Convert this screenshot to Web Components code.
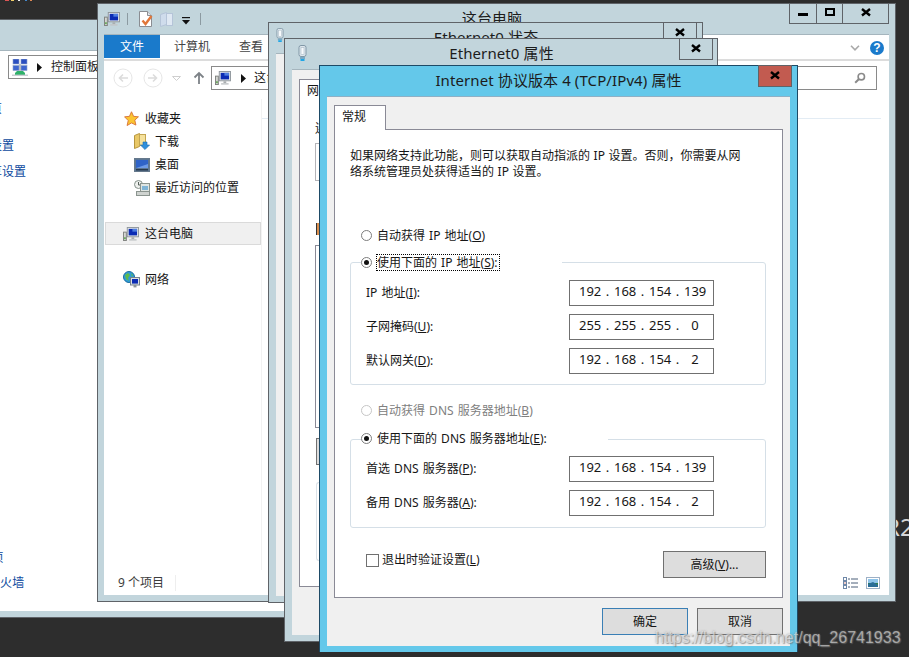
<!DOCTYPE html>
<html>
<head>
<meta charset="utf-8">
<style>
  html, body { margin: 0; height: 657px; overflow: hidden; background: #2d2d2d; }
  body { position: relative; font: 12px/16px "Noto Sans", "Noto Sans CJK SC", sans-serif; color: #111; }
  .crumbs { position: absolute; left: 5px; top: 0; width: 28px; height: 1px; background: linear-gradient(90deg, #d55 0 4px, transparent 4px 6px, #ec6 6px 9px, transparent 9px 13px, #eee 13px 15px, transparent 15px 20px, #48c 20px 22px, transparent 22px 25px, #d85 25px 27px, transparent 27px); }
  .r2 { position: absolute; left: 885px; top: 511px; font-size: 24px; line-height: 32px; color: #d6d6d6; }
  .mark { position: absolute; left: 655px; top: 629px; z-index: 9; font: 16px/18px "Liberation Sans", sans-serif; color: rgba(255,255,255,.5); text-shadow: 0 0 2px rgba(120,120,120,.7), 1px 1px 1px rgba(110,110,110,.6); white-space: nowrap; }
</style>
</head>
<body>
<template id="icons">
  <svg data-name="pc" viewBox="0 0 17 15"><rect x=".5" y="5.5" width="3" height="9" fill="#d4d6d2" stroke="#7d7f7c"/><rect x="1" y="11" width="2" height="2" fill="#6caa5f"/><rect x="4.5" y=".5" width="12" height="10" fill="#e3e6e8" stroke="#8e959b"/><rect x="6" y="2" width="9" height="7" fill="#0b2bb4"/><rect x="10" y="2" width="5" height="3" fill="#4d7de0"/><rect x="9" y="11" width="3" height="2" fill="#a9adb0"/><rect x="6.5" y="13" width="8" height="1.6" fill="#c3c6c8"/></svg>
  <svg data-name="doc" viewBox="0 0 15 16"><path d="M1.5.5h8l4 4v11h-12z" fill="#fff" stroke="#8a8d92"/><path d="M9.5.5v4h4" fill="#dfe3e8" stroke="#8a8d92"/><path d="M4.5 9.5l3 3.5 6-8" fill="none" stroke="#e0773a" stroke-width="2.4"/></svg>
  <svg data-name="pages" viewBox="0 0 14 15"><path d="M.5 2.5l6-2v12l-6 2z" fill="#cfdcec" stroke="#b5c4d8"/><rect x="6.5" y="1.5" width="6" height="12" fill="#dfe8f3" stroke="#b5c4d8"/></svg>
  <svg data-name="star" viewBox="0 0 16 16"><path d="M8 .8l2.2 4.9 5.2.5-3.9 3.5 1.2 5.3L8 12.7l-4.7 2.8 1.2-5.3L.6 6.2l5.2-.5z" fill="#fbc531" stroke="#d9743a"/></svg>
  <svg data-name="folder" viewBox="0 0 16 17"><path d="M.5 2.5l5-2v13l-5 2z" fill="#e9c867" stroke="#b7963f"/><rect x="5.5" y="1.5" width="6" height="11" fill="#f5e19c" stroke="#c3a551"/><path d="M9 9h4v3h2.6L11 16.6 6.4 12H9z" fill="#2f8fdc" stroke="#1d6cae" stroke-width=".6"/></svg>
  <svg data-name="desk" viewBox="0 0 16 14"><rect x=".5" y=".5" width="15" height="13" fill="#5c7692" stroke="#66798c"/><rect x="2" y="2" width="12" height="8" fill="#2f63c8"/><path d="M2 10l12-4v4z" fill="#6d9ae6"/><rect x="2" y="11" width="12" height="1.5" fill="#26384c"/></svg>
  <svg data-name="recent" viewBox="0 0 16 16"><circle cx="4.5" cy="4.5" r="4" fill="#eef0ee" stroke="#85908a"/><path d="M4.5 2v3h2.4" fill="none" stroke="#56605a"/><rect x="6.5" y="3.5" width="9" height="8" fill="#dfe5e2" stroke="#8b948f"/><rect x="8" y="6" width="6" height="4" fill="#7fb4d6"/><rect x="2.5" y="11.5" width="13" height="4" fill="#cfd3d0" stroke="#8b948f"/></svg>
  <svg data-name="net" viewBox="0 0 17 17"><circle cx="6" cy="6" r="5.5" fill="#2f9bd9" stroke="#1b6d9e"/><path d="M2 4l3-2 2 2-2 3 1 3-3-2zM8 2l2 2-1 2z" fill="#5fbb4b"/><rect x="7.5" y="6.5" width="9" height="7.5" fill="#d9dfe3" stroke="#74808a"/><rect x="9" y="8" width="6" height="4.6" fill="#0b2bb4"/><rect x="10.5" y="14" width="3" height="2.4" fill="#8d959b"/></svg>
  <svg data-name="panel" viewBox="0 0 16 17"><rect x="1" y="0" width="6" height="5" fill="#2b4fc0" stroke="#8ea2c9" stroke-width=".6"/><rect x="9" y="0" width="6" height="5" fill="#2b4fc0" stroke="#8ea2c9" stroke-width=".6"/><rect x="1" y="6.5" width="6" height="5" fill="#3f66cf" stroke="#8ea2c9" stroke-width=".6"/><rect x="9" y="6.5" width="6" height="5" fill="#3f66cf" stroke="#8ea2c9" stroke-width=".6"/><path d="M8 5v7" stroke="#8c9299"/><path d="M5 12h6l2 2v2H3v-2z" fill="#2fb26a"/><rect x="0" y="15.6" width="16" height="1.2" fill="#bcc2c7"/></svg>
  <svg data-name="usb" viewBox="0 0 9 16"><rect x="1" y=".5" width="7" height="11" rx="2" fill="#dfe8ee" stroke="#8097a6"/><rect x="3" y="2.5" width="3" height="7" fill="#f7fafc" stroke="#a9bac5" stroke-width=".6"/><rect x="2" y="12" width="5" height="2" fill="#7aa9c4"/><rect x="2.5" y="14" width="4" height="2" fill="#1fa6e6"/></svg>
  <svg data-name="details" viewBox="0 0 15 12"><rect x=".5" y=".5" width="3" height="3" fill="#fff" stroke="#6f88a8"/><rect x=".5" y="4.5" width="3" height="3" fill="#fff" stroke="#6f88a8"/><rect x="1.5" y="5.5" width="1" height="1" fill="#c0392b"/><rect x=".5" y="8.5" width="3" height="3" fill="#fff" stroke="#6f88a8"/><path d="M5 2h2M8 2h7M5 6h2M8 6h7M5 10h2M8 10h7" stroke="#4a5f78"/></svg>
  <svg data-name="thumb" viewBox="0 0 14 12"><rect x=".5" y=".5" width="13" height="11" fill="#fff" stroke="#9db0c6"/><rect x="2" y="2" width="10" height="4" fill="#8ec4ea"/><path d="M2 6h10v4H2z" fill="#2f7d4f"/><path d="M2 7l5-2 5 3v2H2z" fill="#2a6d97"/></svg>
  <svg data-name="back" viewBox="0 0 20 20"><circle cx="10" cy="10" r="9" fill="#fff" stroke="#e6e6e6"/><path d="M15 10H7M10 6.5L6.5 10l3.5 3.5" fill="none" stroke="#dcdcdc" stroke-width="1.6"/></svg>
  <svg data-name="fwd" viewBox="0 0 20 20"><circle cx="10" cy="10" r="9" fill="#fff" stroke="#e6e6e6"/><path d="M5 10h8M10 6.5l3.5 3.5-3.5 3.5" fill="none" stroke="#dcdcdc" stroke-width="1.6"/></svg>
  <svg data-name="up" viewBox="0 0 12 14"><path d="M6 13V2M1.5 6.5L6 2l4.5 4.5" fill="none" stroke="#7d8287" stroke-width="1.8"/></svg>
  <svg data-name="drop" viewBox="0 0 9 5"><path d="M.5.5h8L4.5 4.5z" fill="#fff" stroke="#cfcfcf"/></svg>
  <svg data-name="qdrop" viewBox="0 0 8 8"><rect x="0" y="0" width="8" height="1.2" fill="#111"/><path d="M0 3h8L4 7.5z" fill="#111"/></svg>
  <svg data-name="tri" viewBox="0 0 5 9"><path d="M0 0l5 4.5L0 9z" fill="#111"/></svg>
  <svg data-name="chev" viewBox="0 0 10 6"><path d="M1 .8l4 4 4-4" fill="none" stroke="#a9a9a9" stroke-width="1.6"/></svg>
  <svg data-name="lens" viewBox="0 0 12 12"><circle cx="7.3" cy="4.7" r="3.2" fill="none" stroke="#8a8a8a" stroke-width="1.6"/><path d="M5 7L1.2 10.8" stroke="#8a8a8a" stroke-width="2"/></svg>
</template>

<script>
class AppIcon extends HTMLElement {
  constructor() {
    super();
    this.attachShadow({ mode: 'open' });
  }
  connectedCallback() {
    const src = document.getElementById('icons').content.querySelector(`[data-name="${this.getAttribute('name')}"]`);
    this.shadowRoot.innerHTML = `<style>
      :host { display: inline-flex; flex: none; width: ${this.getAttribute('w')}px; height: ${this.getAttribute('h')}px; }
      svg { width: 100%; height: 100%; display: block; }
    </style>`;
    this.shadowRoot.appendChild(src.cloneNode(true));
  }
}

class AppWindow extends HTMLElement {
  constructor() {
    super();
    this.attachShadow({ mode: 'open' });
    this.shadowRoot.innerHTML = `<style>
      :host { position: absolute; display: flex; flex-direction: column; box-sizing: border-box; border: 1px solid #5f6368; background: var(--frame, #c2d5dc); padding: 0 6px 6px; }
      .bar { flex: none; height: 30px; display: grid; grid-template-columns: 1fr auto 1fr; }
      .left { display: flex; align-items: center; min-width: 0; }
      .title { font-size: 15px; line-height: 28px; letter-spacing: .1px; color: #1c1c1c; white-space: nowrap; margin-right: var(--title-nudge, 0px); }
      .right { display: flex; justify-content: flex-end; align-items: flex-start; margin-top: -1px; }
      .body { flex: 1; min-height: 0; display: flex; flex-direction: column; background: var(--inner, #fff); border-top: 1px solid var(--edge, #a5b5bd); box-sizing: border-box; overflow: hidden; }
    </style>
    <div class="bar">
      <div class="left"><slot name="left"></slot></div>
      <div class="title"><slot name="title"></slot></div>
      <div class="right"><slot name="buttons"></slot></div>
    </div>
    <div class="body"><slot></slot></div>`;
  }
}

class CaptionButton extends HTMLElement {
  constructor() {
    super();
    this.attachShadow({ mode: 'open' });
  }
  connectedCallback() {
    const glyphs = {
      x: '<path d="M1 1l8 6.5M9 1L1 7.5" stroke="#000" stroke-width="2.4" fill="none"/>',
      min: '<rect x="0" y="5" width="10" height="3" fill="#000"/>',
      max: '<rect x="1" y="1" width="8" height="6" stroke="#000" stroke-width="2" fill="none"/>'
    };
    this.shadowRoot.innerHTML = `<style>
      :host { display: flex; align-items: center; justify-content: center; box-sizing: border-box; height: var(--h, 22px); width: ${this.getAttribute('w')}px; border: 1px solid #5f6368; margin-left: -1px; background: var(--btn, transparent); }
      svg { width: 10px; height: 9px; display: block; margin-top: -2px; }
    </style><svg viewBox="0 0 10 9">${glyphs[this.getAttribute('kind')]}</svg>`;
  }
}

class ExplorerPane extends HTMLElement {
  constructor() {
    super();
    this.attachShadow({ mode: 'open' });
    this.shadowRoot.innerHTML = `<style>
      :host { display: flex; flex-direction: column; flex: 1; min-height: 0; font-size: 12px; line-height: 16px; color: #161616; }
      .ribbon { flex: none; height: 26px; box-sizing: border-box; border-bottom: 2px solid #dcdcdc; display: flex; }
      .file { width: 56px; height: 23px; background: #1a7acb; color: #fff; text-align: center; line-height: 23px; }
      .tab { color: #444; line-height: 23px; }
      .ribbon-end { margin-left: auto; display: flex; align-items: center; gap: 10px; padding: 0 5px 0 0; height: 26px; }
      .help { width: 14px; height: 14px; border-radius: 50%; background: #1a7acb; color: #fff; font: bold 12px/14px "Liberation Sans", sans-serif; text-align: center; }
      .nav { flex: none; height: 38px; box-sizing: border-box; padding: 5px 12px 0 9px; display: flex; align-items: flex-start; }
      .box { box-sizing: border-box; height: 24px; border: 1px solid #8a8a8a; display: flex; align-items: center; background: #fff; white-space: nowrap; overflow: hidden; }
      .addr { flex: 1; padding-left: 3px; gap: 5px; }
      .search { width: 200px; margin-left: 6px; justify-content: flex-end; padding-right: 10px; }
      .navbtn { margin-top: 2px; }
      .main { flex: 1; min-height: 0; display: flex; }
      .tree { width: 158px; box-sizing: border-box; border-right: 1px solid #f2f2f2; display: grid; grid-auto-rows: 23px; padding-top: 8px; align-content: start; }
      .rest { flex: 1; padding-right: 8px; }
      .cols { height: 19px; border-bottom: 1px solid #e3ecf4; }
      .status { flex: none; height: 25px; display: flex; align-items: center; padding: 0 9px 0 14px; color: #3c3c3c; }
      .count { padding-right: 11px; border-right: 1px solid #eeeeee; }
      .views { margin-left: auto; display: flex; gap: 8px; }
    </style>
    <div class="ribbon">
      <div class="file">文件</div>
      <div class="tab" style="margin-left:14px">计算机</div>
      <div class="tab" style="margin-left:29px">查看</div>
      <div class="ribbon-end">
        <app-icon name="chev" w="10" h="6"></app-icon>
        <div class="help">?</div>
      </div>
    </div>
    <div class="nav">
      <app-icon class="navbtn" name="back" w="20" h="20"></app-icon>
      <app-icon class="navbtn" name="fwd" w="20" h="20" style="margin-left:10px"></app-icon>
      <app-icon class="navbtn" name="drop" w="9" h="5" style="margin:10px 0 0 9px"></app-icon>
      <app-icon class="navbtn" name="up" w="12" h="14" style="margin:5px 0 0 12px"></app-icon>
      <div class="box addr" style="margin-left:6px">
        <app-icon name="pc" w="16" h="14"></app-icon>
        <app-icon name="tri" w="5" h="9" style="margin:0 3px 0 5px"></app-icon>
        <span>这台电脑</span>
      </div>
      <div class="box search"><app-icon name="lens" w="12" h="12"></app-icon></div>
    </div>
    <div class="main">
      <div class="tree">
        <tree-row><app-icon slot="icon" name="star" w="15" h="15"></app-icon>收藏夹</tree-row>
        <tree-row child><app-icon slot="icon" name="folder" w="16" h="17"></app-icon>下载</tree-row>
        <tree-row child><app-icon slot="icon" name="desk" w="16" h="14"></app-icon>桌面</tree-row>
        <tree-row child><app-icon slot="icon" name="recent" w="16" h="16"></app-icon>最近访问的位置</tree-row>
        <div></div>
        <tree-row selected><app-icon slot="icon" name="pc" w="16" h="14"></app-icon>这台电脑</tree-row>
        <div></div>
        <tree-row><app-icon slot="icon" name="net" w="17" h="17"></app-icon>网络</tree-row>
      </div>
      <div class="rest"><div class="cols"></div></div>
    </div>
    <div class="status">
      <div class="count">9 个项目</div>
      <div class="views">
        <app-icon name="details" w="15" h="12"></app-icon>
        <app-icon name="thumb" w="14" h="12"></app-icon>
      </div>
    </div>`;
  }
}

class TreeRow extends HTMLElement {
  constructor() {
    super();
    this.attachShadow({ mode: 'open' });
    this.shadowRoot.innerHTML = `<style>
      :host { display: flex; align-items: center; box-sizing: border-box; height: 23px; padding-left: 17px; gap: 6px; margin-left: 1px; white-space: nowrap; border: 1px solid transparent; }
      :host([child]) { padding-left: 28px; gap: 5px; }
      :host([selected]) { background: #f0f0f0; border-color: #dadada; }
      .i { width: 16px; display: flex; justify-content: center; }
    </style><span class="i"><slot name="icon"></slot></span><slot></slot>`;
  }
}

class RadioOption extends HTMLElement {
  constructor() {
    super();
    this.attachShadow({ mode: 'open' });
    this.shadowRoot.innerHTML = `<style>
      :host { display: flex; align-items: center; height: 18px; white-space: nowrap; --ring: #7d7d7d; }
      :host([disabled]) { color: #808080; --ring: #c6c6c6; }
      .dot { flex: none; width: 11px; height: 11px; box-sizing: border-box; border: 1px solid var(--ring); border-radius: 50%; background: #fff; display: flex; align-items: center; justify-content: center; }
      :host([checked]) .dot::after { content: ""; width: 5px; height: 5px; border-radius: 50%; background: #111; }
      .label { margin-left: 4px; padding: 0 1px 0 0; border: 1px solid transparent; line-height: 15px; }
      :host([focus]) .label { border: 1px dotted #000; }
    </style><span class="dot"></span><span class="label"><slot></slot></span>`;
  }
}

class FieldGroup extends HTMLElement {
  constructor() {
    super();
    this.attachShadow({ mode: 'open' });
    this.shadowRoot.innerHTML = `<style>
      :host { display: block; box-sizing: border-box; border: 1px solid #d5dfe7; border-radius: 3px; padding: 0 0 var(--pad-b, 10px) 15px; }
      .legend { display: flex; box-sizing: border-box; height: 18px; width: var(--legend-w); margin: var(--legend-t, -10px) 0 9px -5px; background: #fff; }
      .rows { display: grid; grid-template-columns: 203px 145px; row-gap: 8px; align-items: center; }
    </style><div class="legend"><slot name="legend"></slot></div><div class="rows"><slot></slot></div>`;
  }
}

class IpField extends HTMLElement {
  constructor() {
    super();
    this.attachShadow({ mode: 'open' });
  }
  connectedCallback() {
    const parts = this.getAttribute('value').split('.');
    const cells = parts.map((p, i) => `<span class="n">${p}</span>${i < 3 ? '<span class="d">.</span>' : ''}`).join('');
    this.shadowRoot.innerHTML = `<style>
      :host { display: block; box-sizing: border-box; width: 145px; height: 26px; border: 1px solid #707070; background: #fff; padding-left: 9px; font-size: 13px; line-height: 21px; color: #161616; }
      .cells { display: flex; }
      .n { width: 22px; text-align: center; }
      .d { width: 13px; text-align: center; }
    </style><div class="cells">${cells}</div>`;
  }
}

class PushButton extends HTMLElement {
  constructor() {
    super();
    this.attachShadow({ mode: 'open' });
    this.shadowRoot.innerHTML = `<style>
      :host { display: flex; align-items: center; justify-content: center; box-sizing: border-box; height: 27px; width: 86px; border: 1px solid #707070; background: #dddddd; white-space: nowrap; }
      :host([primary]) { border-color: #3a7fb5; }
    </style><slot></slot>`;
  }
}

class CheckOption extends HTMLElement {
  constructor() {
    super();
    this.attachShadow({ mode: 'open' });
    this.shadowRoot.innerHTML = `<style>
      :host { display: flex; align-items: center; height: 18px; white-space: nowrap; }
      .box { width: 13px; height: 13px; box-sizing: border-box; border: 1px solid #707070; background: #fff; margin-right: 3px; }
    </style><span class="box"></span><slot></slot>`;
  }
}

class TcpDialog extends HTMLElement {
  constructor() {
    super();
    this.attachShadow({ mode: 'open' });
    this.shadowRoot.innerHTML = `<style>
      :host { display: flex; flex-direction: column; flex: 1; min-height: 0; padding: 8px 7px 11px; background: #f0f0f0; font-size: 12px; line-height: 16px; color: #161616; word-spacing: 1px; }
      .tab { width: 52px; height: 25px; margin-bottom: -1px; box-sizing: border-box; border: 1px solid #8a8a96; border-bottom: 0; background: #fff; padding: 3px 0 0 7px; position: relative; z-index: 1; }
      .page { flex: 1; min-height: 0; box-sizing: border-box; border: 1px solid #8a8a96; background: #fff; padding: 18px 16px 0 15px; display: flex; flex-direction: column; }
      p { margin: 0 0 46px; white-space: nowrap; word-spacing: .5px; }
      .radio-1 { margin-left: 11px; }
      .foot { display: flex; justify-content: space-between; align-items: flex-start; margin: 23px 0 0 16px; }
      .actions { display: flex; justify-content: flex-end; gap: 9px; margin-top: 10px; }
      .adv { width: 103px; }
    </style>
    <div class="tab">常规</div>
    <div class="page">
      <p>如果网络支持此功能，则可以获取自动指派的 IP 设置。否则，你需要从网<br>络系统管理员处获得适当的 IP 设置。</p>
      <radio-option class="radio-1">自动获得 IP 地址(<u>O</u>)</radio-option>
      <field-group style="--legend-w:201px;margin-top:18px">
        <radio-option slot="legend" checked focus>使用下面的 IP 地址(<u>S</u>):</radio-option>
        <span>IP 地址(<u>I</u>):</span><ip-field value="192.168.154.139"></ip-field>
        <span>子网掩码(<u>U</u>):</span><ip-field value="255.255.255.0"></ip-field>
        <span>默认网关(<u>D</u>):</span><ip-field value="192.168.154.2"></ip-field>
      </field-group>
      <radio-option class="radio-1" disabled style="margin-top:16px">自动获得 DNS 服务器地址(<u>B</u>)</radio-option>
      <field-group style="--legend-w:247px;--legend-t:-11px;--pad-b:11px;margin-top:20px">
        <radio-option slot="legend" checked>使用下面的 DNS 服务器地址(<u>E</u>):</radio-option>
        <span>首选 DNS 服务器(<u>P</u>):</span><ip-field value="192.168.154.139"></ip-field>
        <span>备用 DNS 服务器(<u>A</u>):</span><ip-field value="192.168.154.2"></ip-field>
      </field-group>
      <div class="foot">
        <check-option>退出时验证设置(<u>L</u>)</check-option>
        <push-button class="adv">高级(<u>V</u>)...</push-button>
      </div>
    </div>
    <div class="actions">
      <push-button primary>确定</push-button>
      <push-button>取消</push-button>
    </div>`;
  }
}

class PropsPane extends HTMLElement {
  constructor() {
    super();
    this.attachShadow({ mode: 'open' });
    this.shadowRoot.innerHTML = `<style>
      :host { display: flex; flex-direction: column; flex: 1; min-height: 0; padding: 9px 0 48px 7px; background: #f0f0f0; font-size: 12px; line-height: 16px; color: #161616; }
      .page { flex: 1; box-sizing: border-box; border: 1px solid #8a8a96; border-right: 0; background: #fff; padding: 3px 0 0 7px; display: flex; flex-direction: column; }
      .inner { margin-left: 8px; display: flex; flex-direction: column; }
      .frag { box-sizing: border-box; width: 30px; border: 1px solid #b4b4b8; border-right: 0; }
      .icon { width: 5px; height: 12px; margin-left: 1px; background: #d98f4f; border-left: 1px solid #333; }
      .btn { width: 30px; height: 27px; margin-left: 1px; box-sizing: border-box; border: 1px solid #707070; background: #dddddd; }
    </style>
    <div class="page">
      <div>网络</div>
      <div class="inner">
        <div style="margin-top:22px;height:16px;white-space:nowrap">连接时使用:</div>
        <div class="frag" style="margin-top:6px;height:38px"></div>
        <div class="icon" style="margin-top:42px"></div>
        <div class="frag" style="margin-top:10px;height:183px;border-color:#8a8a96"></div>
        <div class="btn" style="margin-top:10px"></div>
        <div class="frag" style="margin:17px 0 0 1px;height:79px;border-color:#dbe2e8;border-radius:3px"></div>
      </div>
    </div>`;
  }
}

class BackPane extends HTMLElement {
  constructor() {
    super();
    this.attachShadow({ mode: 'open' });
    this.shadowRoot.innerHTML = `<style>
      :host { display: flex; flex-direction: column; flex: 1; font-size: 12px; line-height: 16px; color: #1a1a1a; }
      .addr { margin: 4px 0 0 101px; height: 24px; box-sizing: border-box; border: 1px solid #8a8a8a; display: flex; align-items: center; padding-left: 3px; white-space: nowrap; }
      .links { margin: 22px 0 0 23px; display: flex; flex-direction: column; color: #0d4a9e; white-space: nowrap; }
    </style>
    <div class="addr">
      <app-icon name="panel" w="16" h="17"></app-icon>
      <app-icon name="tri" w="5" h="9" style="margin:0 9px 0 9px"></app-icon>
      <span>控制面板</span>
    </div>
    <div class="links">
      <span>控制面板主页</span>
      <span style="margin-top:21px">更改适配器设置</span>
      <span style="margin-top:10px">更改高级共享设置</span>
      <span style="margin-top:370px">Internet 选项</span>
      <span style="margin-top:9px;letter-spacing:.4px">Windows 防火墙</span>
    </div>`;
  }
}

customElements.define('app-icon', AppIcon);
customElements.define('app-window', AppWindow);
customElements.define('caption-button', CaptionButton);
customElements.define('tree-row', TreeRow);
customElements.define('explorer-pane', ExplorerPane);
customElements.define('radio-option', RadioOption);
customElements.define('field-group', FieldGroup);
customElements.define('ip-field', IpField);
customElements.define('push-button', PushButton);
customElements.define('check-option', CheckOption);
customElements.define('tcp-dialog', TcpDialog);
customElements.define('props-pane', PropsPane);
customElements.define('back-pane', BackPane);
</script>

<div class="crumbs"></div>
<div class="r2">R2</div>

<app-window style="left:-100px;top:19px;width:800px;height:599px">
  <back-pane></back-pane>
</app-window>

<app-window style="left:97px;top:3px;width:799px;height:599px;--title-nudge:9px">
  <span slot="left" style="display:flex;align-items:center">
    <app-icon name="pc" w="16" h="14"></app-icon>
    <span style="width:1px;height:12px;background:#8c9aa1;margin:0 10px 0 7px"></span>
    <app-icon name="doc" w="15" h="16"></app-icon>
    <app-icon name="pages" w="14" h="15" style="margin-left:7px"></app-icon>
    <app-icon name="qdrop" w="8" h="8" style="margin:3px 0 0 8px"></app-icon>
    <span style="width:1px;height:12px;background:#8c9aa1;margin-left:10px"></span>
  </span>
  <span slot="title">这台电脑</span>
  <span slot="buttons" style="display:flex;--h:21px">
    <caption-button kind="min" w="28"></caption-button>
    <caption-button kind="max" w="27"></caption-button>
    <caption-button kind="x" w="47"></caption-button>
  </span>
  <explorer-pane></explorer-pane>
</app-window>

<app-window style="left:268px;top:22px;width:435px;height:581px;padding-left:7px;--inner:#f0f0f0">
  <span slot="left" style="display:flex;margin-top:-6px"><app-icon name="usb" w="8" h="14"></app-icon></span>
  <span slot="title">Ethernet0 状态</span>
  <span slot="buttons" style="display:flex;margin-right:-1px"><caption-button kind="x" w="34"></caption-button></span>
</app-window>

<app-window style="left:284px;top:38px;width:434px;height:604px;padding-left:7px">
  <span slot="left" style="display:flex;padding-left:6px;margin-top:-2px"><app-icon name="usb" w="9" h="16"></app-icon></span>
  <span slot="title">Ethernet0 属性</span>
  <span slot="buttons" style="display:flex;margin-right:-2px"><caption-button kind="x" w="34"></caption-button></span>
  <props-pane></props-pane>
</app-window>

<app-window style="left:319px;top:65px;width:479px;height:587px;padding-left:7px;padding-right:7px;--frame:#64c8ea;--edge:#8fb0c5;border-color:#1d4a66;border-bottom:0">
  <span slot="title">Internet 协议版本 4 (TCP/IPv4) 属性</span>
  <span slot="buttons" style="display:flex;margin-right:-2px;--btn:#c25b50;--h:22px"><caption-button kind="x" w="34"></caption-button></span>
  <tcp-dialog></tcp-dialog>
</app-window>

<div class="mark">https://blog.csdn.net/qq_26741933</div>
</body>
</html>
